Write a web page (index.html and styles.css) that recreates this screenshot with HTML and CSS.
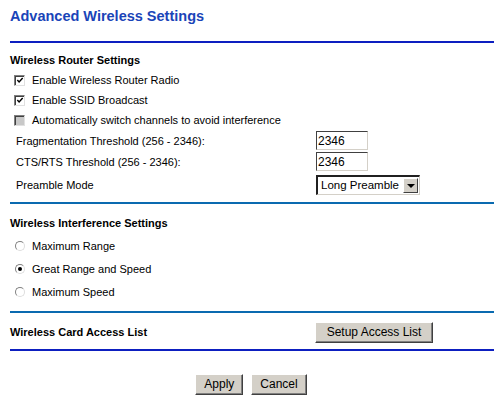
FILE: index.html
```html
<!DOCTYPE html>
<html lang="en">
  <head>
    <meta charset="UTF-8" />
    <title>Advanced Wireless Settings</title>
    <link rel="stylesheet" href="styles.css">
  </head>
  <body>
    <div class="page">
      <h1>Advanced Wireless Settings</h1>
      <div class="rule dark"></div>

      <!-- Router settings -->
      <h2 class="first">Wireless Router Settings</h2>
      <div class="opt">
        <span class="box on"><svg viewBox="0 0 9 9"><path d="M1.5 4 L3.5 6.2 L7.5 1.8" /></svg></span>
        Enable Wireless Router Radio
      </div>
      <div class="opt">
        <span class="box on"><svg viewBox="0 0 9 9"><path d="M1.5 4 L3.5 6.2 L7.5 1.8" /></svg></span>
        Enable SSID Broadcast
      </div>
      <div class="opt">
        <span class="box off"></span>
        Automatically switch channels to avoid interference
      </div>
      <div class="field">
        <span>Fragmentation Threshold (256 - 2346):</span>
        <span class="text-in">2346</span>
      </div>
      <div class="field">
        <span>CTS/RTS Threshold (256 - 2346):</span>
        <span class="text-in">2346</span>
      </div>
      <div class="field tall">
        <span>Preamble Mode</span>
        <span class="select">Long Preamble<span class="arrow"></span></span>
      </div>
      <div class="rule"></div>

      <!-- Interference -->
      <h2>Wireless Interference Settings</h2>
      <div class="opt radio-row"><span class="radio"></span>Maximum Range</div>
      <div class="opt radio-row"><span class="radio sel"></span>Great Range and Speed</div>
      <div class="opt radio-row"><span class="radio"></span>Maximum Speed</div>
      <div class="rule"></div>

      <div class="access">
        <h2>Wireless Card Access List</h2>
        <span class="btn wide">Setup Access List</span>
      </div>
      <div class="rule dark"></div>

      <div class="actions">
        <span class="btn">Apply</span>
        <span class="btn">Cancel</span>
      </div>
    </div>
  </body>
</html>
```

FILE: styles.css
```css
/* Page */
body {
  margin: 0;
  background: #fff;
  color: #000;
  font-family: "Liberation Sans", Arial, sans-serif;
  font-size: 11px;
}

.page {
  width: 484px;
  padding: 6px 6px 0 10px;
}

h1 {
  margin: 0;
  height: 22px;
  line-height: 20px;
  font-size: 14.5px;
  font-weight: bold;
  color: #1a44b8;
}

h2 {
  margin: 0;
  font-size: 11px;
  font-weight: bold;
  line-height: 14px;
}

.page > h2 {
  margin: 12px 0 4px 0;
}
.page > h2.first {
  margin: 10px 0 3px 0;
}

/* Blue separators */
.rule {
  height: 2px;
  background: #0a6ab0;
  margin-top: 5px;
}
.rule.dark {
  background: #0d1fc0;
  margin-top: 13px;
}
.radio-row + .rule {
  margin-top: 8px;
}

/* Checkbox / radio rows */
.opt {
  display: flex;
  align-items: center;
  gap: 7px;
  height: 20px;
  padding-left: 4px;
}

.box {
  width: 11px;
  height: 11px;
  box-sizing: border-box;
  border-top: 1px solid #808080;
  border-left: 1px solid #808080;
  border-right: 1px solid #e0e0e0;
  border-bottom: 1px solid #e0e0e0;
  box-shadow: inset 1px 1px 0 #404040;
  background: #fff;
  display: inline-flex;
}
.box svg {
  width: 9px;
  height: 9px;
  margin: 0 0 0 1px;
}
.box path {
  fill: none;
  stroke: #000;
  stroke-width: 1.6;
}
.box.off {
  background: #c8c8c8;
}

.radio-row {
  height: 23px;
  padding-left: 5px;
}

.radio {
  width: 10px;
  height: 10px;
  box-sizing: border-box;
  border-radius: 50%;
  border: 1px solid #808080;
  border-right-color: #ddd;
  border-bottom-color: #ddd;
  background: #fff;
  display: inline-flex;
  align-items: center;
  justify-content: center;
}
.radio.sel::after {
  content: "";
  width: 4px;
  height: 4px;
  border-radius: 50%;
  background: #000;
}

/* Text fields */
.field {
  display: flex;
  align-items: center;
  justify-content: space-between;
  height: 21px;
  padding-left: 6px;
  padding-right: 126px;
}
.field.tall {
  height: 25px;
  padding-right: 74px;
}

.text-in {
  width: 52px;
  height: 19px;
  box-sizing: border-box;
  border-top: 1px solid #404040;
  border-left: 1px solid #404040;
  border-right: 1px solid #d4d0c8;
  border-bottom: 1px solid #d4d0c8;
  padding: 2px 0 0 1px;
  font-size: 12px;
}

.select {
  width: 104px;
  height: 20px;
  box-sizing: border-box;
  border-top: 2px solid #202020;
  border-left: 2px solid #202020;
  border-right: 1px solid #d4d0c8;
  border-bottom: 1px solid #d4d0c8;
  display: flex;
  align-items: center;
  justify-content: space-between;
  padding: 0 1px 0 3px;
  font-size: 11.5px;
  white-space: nowrap;
}
.arrow {
  width: 15px;
  height: 15px;
  flex: none;
  box-sizing: border-box;
  background: #d4d0c8;
  border: 1px solid #fff;
  border-right-color: #404040;
  border-bottom-color: #404040;
  position: relative;
}
.arrow::after {
  content: "";
  position: absolute;
  left: 3px;
  top: 5px;
  border-left: 4px solid transparent;
  border-right: 4px solid transparent;
  border-top: 4px solid #000;
}

/* Buttons */
.btn {
  display: inline-block;
  background: #d4d0c8;
  border-top: 1px solid #fff;
  border-left: 1px solid #fff;
  border-right: 1px solid #404040;
  border-bottom: 1px solid #404040;
  box-shadow: inset -1px -1px 0 #808080;
  font-size: 12px;
  line-height: 16px;
  padding: 1px 8px 2px 8px;
}
.btn.wide {
  width: 100px;
  text-align: center;
}

.access {
  display: flex;
  align-items: center;
  justify-content: space-between;
  height: 22px;
  margin-top: 8px;
  padding-right: 61px;
}
.access h2 {
  margin: 0;
}
.access + .rule {
  margin-top: 6px;
}

.actions {
  display: flex;
  justify-content: center;
  gap: 8px;
  margin-top: 23px;
  padding-right: 2px;
}
```
